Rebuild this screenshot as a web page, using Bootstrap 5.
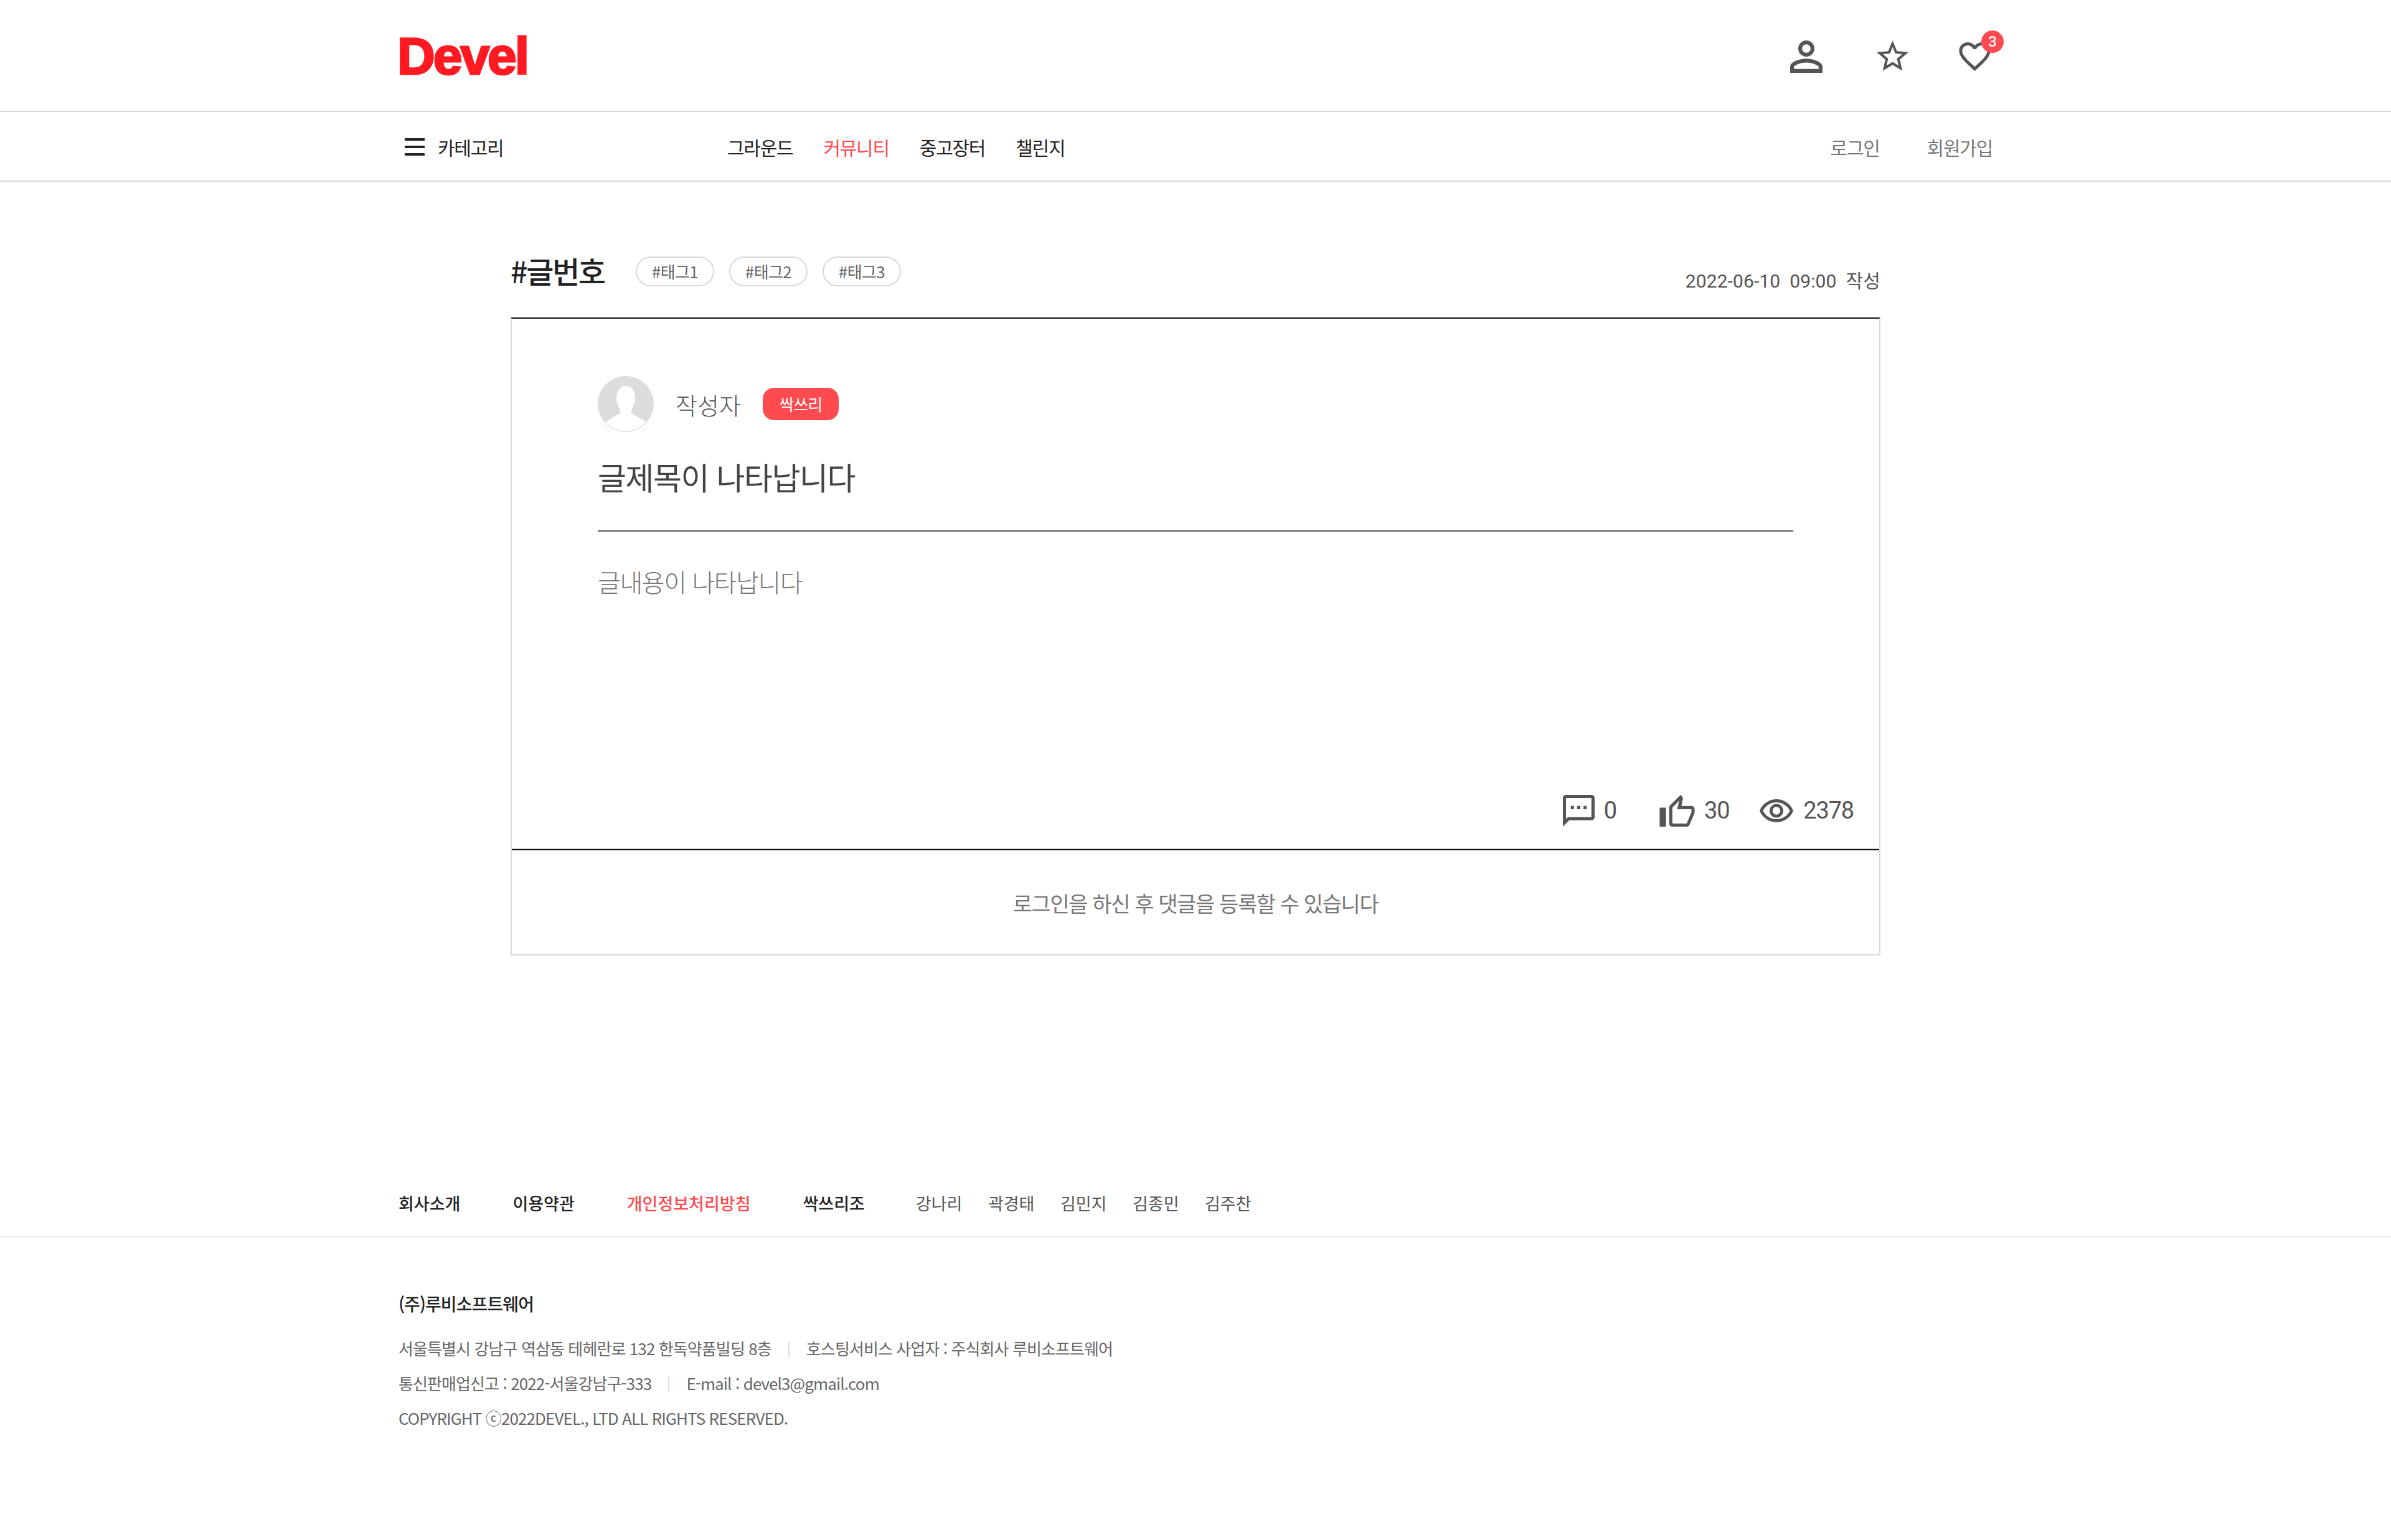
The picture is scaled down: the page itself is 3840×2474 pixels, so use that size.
<!DOCTYPE html>
<html lang="ko">
<head>
  <meta charset="utf-8">
  <title>Devel</title>
  <link rel="stylesheet" href="https://cdn.jsdelivr.net/npm/bootstrap@5.3.0/dist/css/bootstrap.min.css">
  <style>
    body { font-family: "Noto Sans CJK KR", sans-serif; background: #fff; color: #222; min-height: 2474px; }
    a { text-decoration: none; color: inherit; }
    .wide-wrap { width: 2560px; margin: 0 auto; }
    .top-bar { height: 180px; border-bottom: 2px solid #d9d9d9; }
    .logo-text { font-family: "Liberation Sans", sans-serif; font-weight: 700; font-size: 84px; line-height: 84px; letter-spacing: -3px; color: #ff1a22; -webkit-text-stroke: 3px #ff1a22; margin-top: 2px; margin-left: -2px; }
    .top-icons { padding-right: 3px; padding-top: 4px; }
    .top-icons svg { fill: #555; display: block; }
    .icon-star { margin: -3px 81px 0 87px; }
    .heart-wrap { position: relative; }
    .heart-count { position: absolute; right: -21px; top: -19px; width: 36px; height: 36px; border-radius: 50%; background: #ff4a50; color: #fff; font-family: Roboto, sans-serif; font-weight: 500; font-size: 24px; line-height: 36px; text-align: center; }
    .menu-bar { height: 112px; border-bottom: 2px solid #d9d9d9; font-size: 30px; letter-spacing: -1.25px; }
    .menu-bar .wide-wrap { padding-top: 2px; }
    .burger { width: 32px; height: 28px; margin: 0 21px 0 10px; border-top: 4px solid #222; border-bottom: 4px solid #222; position: relative; }
    .burger::after { content: ""; position: absolute; left: 0; right: 0; top: 8px; height: 4px; background: #222; }
    .cat-col { width: 528px; }
    .menu-links { gap: 49px; }
    .menu-links .on { color: #ff4a50; }
    .auth-links { gap: 76px; color: #777; }
    .post-wrap { width: 2200px; margin: 0 auto; padding-top: 120px; }
    .post-head { height: 98px; }
    .post-no { font-size: 48px; font-weight: 500; line-height: 60px; letter-spacing: -2.2px; color: #222; width: 201px; margin-top: -8px; }
    .tag-pill { width: 126px; height: 48px; border: 2px solid #d9d9d9; border-radius: 24px; font-size: 26px; line-height: 44px; letter-spacing: -.6px; text-align: center; color: #666; margin-right: 24px; }
    .post-date { font-family: Roboto, "Noto Sans CJK KR", sans-serif; font-size: 30px; letter-spacing: .1px; color: #555; white-space: pre; padding-top: 17px; }
    .post-box { border: 2px solid #d9d9d9; border-top: 2px solid #111; border-bottom: 0; }
    .post-inner { height: 852px; padding: 92px 138px 0; position: relative; border-bottom: 2px solid #d9d9d9; }
    .avatar-pic { width: 90px; height: 90px; display: block; }
    .author-name { font-size: 38px; color: #555; margin: 0 35px; font-weight: 300; }
    .grade-chip { width: 122px; height: 52px; border-radius: 18px; background: #ff4a50; color: #fff; font-size: 26px; line-height: 52px; letter-spacing: -1px; text-align: center; }
    .post-title { font-size: 50px; line-height: 70px; letter-spacing: -1.5px; color: #444; font-weight: 400; margin: 36px 0 0; padding-bottom: 52px; border-bottom: 2px solid #555; }
    .post-text { font-size: 40px; line-height: 60px; letter-spacing: -1.4px; color: #777; margin-top: 50px; font-weight: 300; }
    .post-stats { position: absolute; right: 41px; bottom: 31px; font-family: Roboto, sans-serif; font-size: 38px; letter-spacing: -1.2px; font-weight: 400; color: #555; }
    .post-stats svg { fill: #555; display: block; }
    .stat-item { gap: 15px; margin-left: 69px; }
    .stat-item:nth-child(3) { margin-left: 49px; gap: 16px; }
    .reply-box { height: 171px; border-top: 2px solid #111; line-height: 169px; text-align: center; font-size: 34px; letter-spacing: -1.4px; color: #777; border-bottom: 2px solid #d9d9d9; }
    .foot-nav { margin-top: 359px; border-bottom: 2px solid #eee; height: 94px; font-size: 27px; }
    .foot-nav .wide-wrap { height: 79px; gap: 84px; }
    .foot-strong { font-weight: 500; color: #222; }
    .foot-red { font-weight: 500; color: #ff4a50; }
    .foot-names { gap: 41.5px; color: #555; margin-left: -2px; }
    .foot-info { padding-top: 85px; color: #666; font-size: 26px; letter-spacing: -0.9px; }
    .foot-co { font-size: 28px; font-weight: 500; color: #222; line-height: 42px; margin-bottom: 23px; }
    .foot-line { line-height: 56px; }
    .foot-sep { display: inline-block; width: 2px; height: 24px; background: #ddd; margin: 0 27px; vertical-align: -3px; }
  </style>
</head>
<body>
  <header class="top-bar">
    <div class="wide-wrap h-100 d-flex align-items-center justify-content-between">
      <a href="#" class="logo-text">Devel</a>
      <div class="top-icons d-flex align-items-center">
        <a href="#"><svg width="52" height="52" viewBox="4 4 16 16"><path d="M12 5.9c1.16 0 2.1.94 2.1 2.1s-.94 2.1-2.1 2.1S9.9 9.16 9.9 8s.94-2.1 2.1-2.1m0 9c2.97 0 6.1 1.46 6.1 2.1v1.1H5.9V17c0-.64 3.13-2.1 6.1-2.1M12 4C9.79 4 8 5.79 8 8s1.79 4 4 4 4-1.79 4-4-1.79-4-4-4zm0 9c-2.67 0-8 1.34-8 4v3h16v-3c0-2.66-5.33-4-8-4z"/></svg></a>
        <a href="#" class="icon-star"><svg width="51" height="49" viewBox="2 2 20 19"><path d="M22 9.24l-7.19-.62L12 2 9.19 8.63 2 9.24l5.46 4.73L5.82 21 12 17.27 18.18 21l-1.63-7.03L22 9.24zM12 15.4l-3.76 2.27 1-4.28-3.32-2.88 4.38-.38L12 6.1l1.71 4.04 4.38.38-3.32 2.88 1 4.28L12 15.4z"/></svg></a>
        <a href="#" class="heart-wrap"><svg width="51" height="46" viewBox="2 3 20 18.35"><path d="M16.5 3c-1.74 0-3.41.81-4.5 2.09C10.91 3.81 9.24 3 7.5 3 4.42 3 2 5.42 2 8.5c0 3.78 3.4 6.86 8.55 11.54L12 21.35l1.45-1.32C18.6 15.36 22 12.28 22 8.5 22 5.42 19.58 3 16.5 3zm-4.4 15.55l-.1.1-.1-.1C7.14 14.24 4 11.39 4 8.5 4 6.5 5.5 5 7.5 5c1.54 0 3.04.99 3.57 2.36h1.87C13.46 5.99 14.96 5 16.5 5c2 0 3.5 1.5 3.5 3.5 0 2.89-3.14 5.74-7.9 10.05z"/></svg><span class="heart-count">3</span></a>
      </div>
    </div>
  </header>

  <nav class="menu-bar">
    <div class="wide-wrap h-100 d-flex align-items-center">
      <div class="cat-col d-flex align-items-center">
        <span class="burger"></span>
        <a href="#">카테고리</a>
      </div>
      <div class="menu-links d-flex flex-grow-1">
        <a href="#">그라운드</a>
        <a href="#" class="on">커뮤니티</a>
        <a href="#">중고장터</a>
        <a href="#">챌린지</a>
      </div>
      <div class="auth-links d-flex">
        <a href="#">로그인</a>
        <a href="#">회원가입</a>
      </div>
    </div>
  </nav>

  <main class="post-wrap">
    <div class="post-head d-flex align-items-start">
      <h2 class="post-no mb-0">#글번호</h2>
      <span class="tag-pill">#태그1</span>
      <span class="tag-pill">#태그2</span>
      <span class="tag-pill">#태그3</span>
      <span class="post-date ms-auto">2022-06-10  09:00  작성</span>
    </div>
    <div class="post-box">
      <div class="post-inner">
        <div class="d-flex align-items-center">
          <svg class="avatar-pic" viewBox="0 0 90 90">
            <circle cx="45" cy="45" r="45" fill="#ddd"/>
            <path d="M45 16c-10 0-15 9-15 20 0 8 4 14 6 18v6L12 74a45 45 0 0 0 66 0L54 60v-6c2-4 6-10 6-18 0-11-5-20-15-20z" fill="#fff"/>
            <path d="M6 74a44 44 0 0 0 78 0a45 45 0 0 1-78 0z" fill="#ddd"/>
          </svg>
          <span class="author-name">작성자</span>
          <span class="grade-chip">싹쓰리</span>
        </div>
        <h1 class="post-title">글제목이 나타납니다</h1>
        <p class="post-text">글내용이 나타납니다</p>
        <div class="post-stats d-flex align-items-center">
          <div class="stat-item d-flex align-items-center">
            <svg width="51" height="51" viewBox="2 2 20 20"><path d="M20 2H4c-1.1 0-1.99.9-1.99 2L2 22l4-4h14c1.1 0 2-.9 2-2V4c0-1.1-.9-2-2-2zM4 17.17V4h16v12H5.17L4 17.17zM11 9h2v2h-2V9zm4 0h2v2h-2V9zM7 9h2v2H7V9z"/></svg>
            <span>0</span>
          </div>
          <div class="stat-item d-flex align-items-center">
            <svg width="57" height="51" viewBox="1 1 22 20"><path d="M9 21h9c.83 0 1.54-.5 1.84-1.22l3.02-7.05c.09-.23.14-.47.14-.73v-2c0-1.1-.9-2-2-2h-6.31l.95-4.57.03-.32c0-.41-.17-.79-.44-1.06L14.17 1 7.58 7.59C7.22 7.95 7 8.45 7 9v10c0 1.1.9 2 2 2zM9 9l4.34-4.34L12 10h9v2l-3 7H9V9zM1 9h4v12H1z"/></svg>
            <span>30</span>
          </div>
          <div class="stat-item d-flex align-items-center">
            <svg width="54" height="37" viewBox="1 4 22 15"><path d="M12 6c3.79 0 7.17 2.13 8.82 5.5C19.17 14.87 15.79 17 12 17s-7.17-2.13-8.82-5.5C4.83 8.13 8.21 6 12 6m0-2C7 4 2.73 7.11 1 11.5 2.73 15.89 7 19 12 19s9.27-3.11 11-7.5C21.27 7.11 17 4 12 4zm0 5c1.38 0 2.5 1.12 2.5 2.5S13.38 14 12 14s-2.5-1.12-2.5-2.5S10.62 9 12 9m0-2c-2.48 0-4.5 2.02-4.5 4.5S9.52 16 12 16s4.5-2.02 4.5-4.5S14.48 7 12 7z"/></svg>
            <span>2378</span>
          </div>
        </div>
      </div>
      <div class="reply-box">로그인을 하신 후 댓글을 등록할 수 있습니다</div>
    </div>
  </main>

  <footer>
    <div class="foot-nav">
      <div class="wide-wrap d-flex align-items-center">
        <a href="#" class="foot-strong">회사소개</a>
        <a href="#" class="foot-strong">이용약관</a>
        <a href="#" class="foot-red">개인정보처리방침</a>
        <a href="#" class="foot-strong">싹쓰리조</a>
        <div class="foot-names d-flex">
          <span>강나리</span><span>곽경태</span><span>김민지</span><span>김종민</span><span>김주찬</span>
        </div>
      </div>
    </div>
    <div class="wide-wrap foot-info">
      <div class="foot-co">(주)루비소프트웨어</div>
      <div class="foot-line">서울특별시 강남구 역삼동 테헤란로 132 한독약품빌딩 8층<span class="foot-sep"></span>호스팅서비스 사업자 : 주식회사 루비소프트웨어</div>
      <div class="foot-line">통신판매업신고 : 2022-서울강남구-333<span class="foot-sep"></span>E-mail : devel3@gmail.com</div>
      <div class="foot-line">COPYRIGHT ⓒ2022DEVEL., LTD ALL RIGHTS RESERVED.</div>
    </div>
  </footer>
  <script src="https://cdn.jsdelivr.net/npm/bootstrap@5.3.0/dist/js/bootstrap.bundle.min.js"></script>
</body>
</html>
